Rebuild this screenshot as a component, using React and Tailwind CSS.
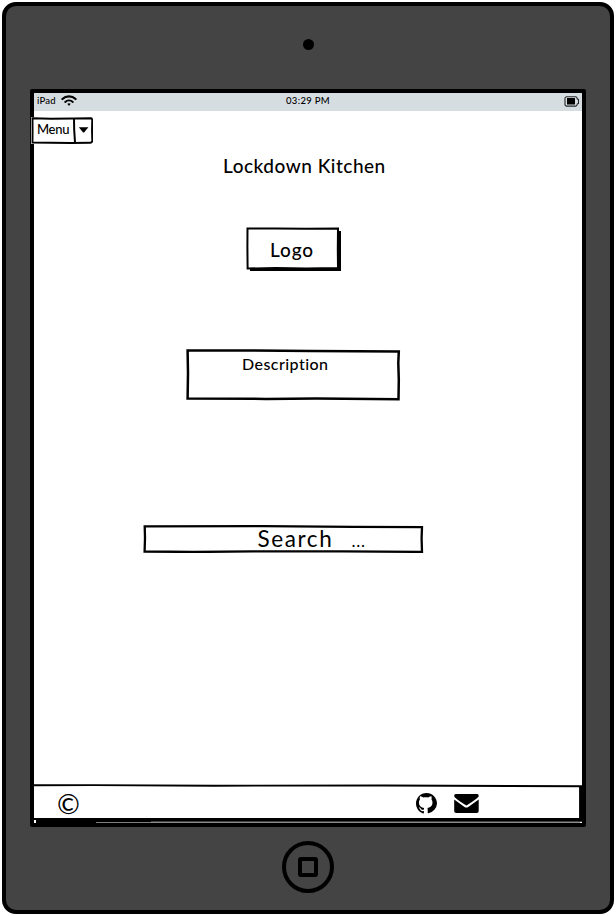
function Wifi() {
  return (
    <svg width="16" height="12" viewBox="0 0 16 12" fill="none" stroke="#000" strokeLinecap="round">
      <path d="M1.400 4C5 .6 11 .6 14.600 4" strokeWidth="2.200" />
      <path d="M4.200 6.900c2.200-2 5.400-2 7.600 0" strokeWidth="2" />
      <path d="M6.300 8.800 8 10.900l1.700-2.100c-1-.7-2.400-.7-3.400 0z" fill="#000" stroke="none" />
    </svg>
  );
}

function Battery() {
  return (
    <svg width="16" height="11" viewBox="0 0 16 11">
      <path d="M2.300.8h9.600l1 .8.400 1.400 1.200.4v4l-1.200.5-.4 1.400-1 .8H2.300L1 9V1.900z" fill="none" stroke="#26282b" strokeWidth="1.100" />
      <path d="M3 2h8v6.500H3z" fill="#000" />
    </svg>
  );
}

function GithubMark() {
  return (
    <svg className="ml-[337px]" width="21" height="21" viewBox="0 0 16 16">
      <path d="M8 0C3.580 0 0 3.580 0 8c0 3.540 2.290 6.530 5.470 7.590.4.070.55-.17.55-.38 0-.19-.01-.82-.01-1.490-2.010.37-2.530-.49-2.690-.94-.09-.23-.48-.94-.82-1.130-.28-.15-.68-.52-.01-.53.63-.01 1.080.58 1.230.82.72 1.210 1.870.87 2.330.66.04-.5.060-.9.100-1.200-1.900-.3-3.900-1-3.900-4.300 0-.87.25-1.600.75-2.200-.08-.2-.36-1.300.12-2.450 0 0 .9-.1 2.400.95.64-.18 1.200-.25 1.880-.25s1.240.07 1.880.25c1.500-1.050 2.400-.95 2.400-.95.480 1.150.2 2.250.12 2.450.5.6.75 1.330.75 2.200 0 3.300-1.950 4-3.850 4.250.1.250.24.730.24 1.480 0 1.070-.01 1.930-.01 2.200 0 .21.15.46.55.38A8.013 8.013 0 0016 8c0-4.420-3.580-8-8-8z" />
    </svg>
  );
}

function Envelope() {
  return (
    <svg className="ml-[16.5px]" width="25" height="19" viewBox="0 0 25 19">
      <path d="M1.500 0h22Q25 0 24.700 2.500 23.500 4.500 12.400 11.600 1 4.500.2 2.500 0 0 1.500 0z" />
      <path d="M.2 5.600 10.500 13q1.900 1 3.800 0L24.700 5.600V17q0 2-2 2H2.200q-2 0-2-2z" />
    </svg>
  );
}

function MenuButton() {
  return (
    <div className="relative -ml-[3px] mt-[6px] flex h-[27px] w-[62px] bg-white">
      <svg className="absolute inset-0" width="62" height="27" viewBox="0 0 62 27" fill="none" stroke="#000">
        <path d="M1.500 1.200 20 1.800 43 1.500 60 1.200Q61.400 1.500 61.200 4L61 14 61.300 24Q61 25.800 59 25.700L40 26 20 25.700 1.500 25.500 1.600 14z" strokeWidth="1.900" />
        <path d="M43 1.500 43.200 13 44 25.500" strokeWidth="2" />
        <path d="M47.800 10.300h9.600l-4.300 5.200h-1z" fill="#000" stroke="none" />
      </svg>
      <span className="w-[43px] pl-[6px] text-[13px] font-medium leading-[25px] tracking-[-0.3px]">Menu</span>
    </div>
  );
}

export default function App() {
  return (
    <div className="flex h-[916px] w-[616px] bg-white p-[2px] font-['Lato','Noto_Sans',sans-serif] text-black">
      <div className="flex h-[912px] w-[612px] flex-col items-center rounded-[14px] border-4 border-black bg-[#444444]">
        <div className="mt-[32.5px] size-[11px] rounded-full bg-black" />
        <div className="mt-[39.5px] flex h-[738px] w-[556px] flex-col rounded-[2px] border-4 border-black bg-white">
          <header className="grid h-[18px] shrink-0 grid-cols-3 items-center bg-[#d6dde0] pb-[2px] text-[9.5px] font-medium leading-[16px]">
            <div className="flex items-center gap-[5px] pl-[3px]">
              <span className="w-[19px] whitespace-nowrap tracking-[0.2px]">iPad</span>
              <Wifi />
            </div>
            <span className="text-center tracking-[0.3px]">03:29 PM</span>
            <div className="flex justify-end pr-[2px]"><Battery /></div>
          </header>
          <MenuButton />
          <main className="flex h-[640px] flex-col">
            <h1 className="ml-[189px] mt-[9px] h-[24px] whitespace-nowrap text-[19px] font-medium leading-[25px] tracking-[0.500px]">Lockdown Kitchen</h1>
            <div className="relative ml-[212px] mt-[50px] h-[45px] w-[96px]">
              <svg className="absolute inset-0" width="96" height="45" viewBox="0 0 96 45">
                <path d="M4 4h91v40H4z" />
                <path d="M1.500 1.500 30 1.400 60 1.800 92 1.600 91.800 22 92 41 60 41.400 30 41 1.600 41.500 1.400 20z" fill="#fff" stroke="#000" strokeWidth="2" />
              </svg>
              <span className="relative ml-[24px] block whitespace-nowrap text-[19px] font-medium leading-[45px] tracking-[0.900px]">Logo</span>
            </div>
            <div className="relative ml-[152px] mt-[76px] h-[53px] w-[215px]">
              <svg className="absolute inset-0" width="215" height="53" viewBox="0 0 215 53" fill="none" stroke="#000" strokeWidth="2.500">
                <path d="M1.600 2.500 60 2.400 125 3 212.800 3.400 212.300 15 212.800 32 212.500 51.200 130 50.600 80 50.900 1.600 50.600 2 25z" />
              </svg>
              <span className="relative ml-[56px] block whitespace-nowrap text-[16px] font-medium leading-[32px] tracking-[0.450px]">Description</span>
            </div>
            <div className="relative ml-[109px] mt-[123px] h-[29px] w-[281px]">
              <svg className="absolute inset-0" width="281" height="29" viewBox="0 0 281 29" fill="none" stroke="#000" strokeWidth="2.300">
                <path d="M1.700 2.300 120 2.200 210 2.800 279 3.100 278.600 14 279 27.900 200 27.400 110 27.400 50 28 1.600 27.500 2 14z" />
              </svg>
              <span className="relative ml-[114.5px] flex whitespace-pre text-[22.5px] leading-[30px] tracking-[1.600px]">
                <span className="w-[94px]">Search</span>
                <span className="text-[17px] leading-[33px] tracking-[0.800px]">...</span>
              </span>
            </div>
          </main>
          <footer className="relative mt-auto h-[40px] w-[548px]">
            <svg className="absolute inset-0" width="548" height="40" viewBox="0 0 548 40">
              <path d="M0 2.200 60 2.100 180 2.700 350 2.500 548 3.300" fill="none" stroke="#000" strokeWidth="1.900" />
              <path d="M2 36.800H547V3" fill="none" stroke="#000" strokeWidth="3.800" />
              <path d="M2 35h60v5H2zM0 35h3v2H0zM62 38h55v1.600H62z" />
              <path d="M117 39.500H546" stroke="#8b8b8b" strokeWidth="1" />
            </svg>
            <div className="relative flex h-[41px] items-center">
              <span className="ml-[23px] w-[22px] text-[27.5px] leading-[38px]">©</span>
              <GithubMark />
              <Envelope />
            </div>
          </footer>
        </div>
        <div className="mt-[14px] flex size-[52px] items-center justify-center rounded-full border-4 border-black">
          <div className="size-[20px] rounded-[3px] border-4 border-black" />
        </div>
      </div>
    </div>
  );
}
